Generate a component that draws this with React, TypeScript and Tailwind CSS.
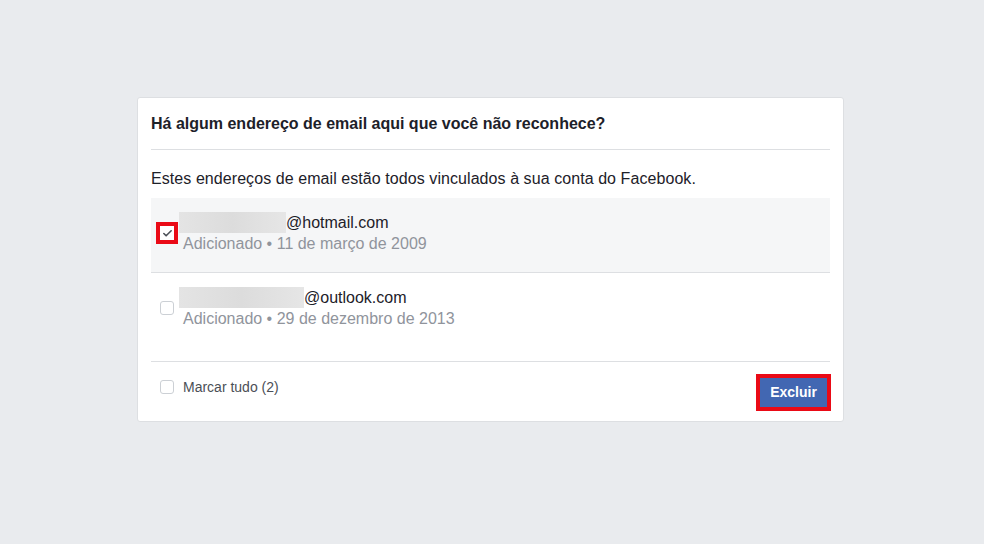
import { Check } from "lucide-react";

const emails = [
  { blur: 107, domain: "@hotmail.com", added: "Adicionado • 11 de março de 2009", checked: true },
  { blur: 125, domain: "@outlook.com", added: "Adicionado • 29 de dezembro de 2013", checked: false },
];

function Box({ checked, marked }: { checked?: boolean; marked?: boolean }) {
  return (
    <span
      className={
        marked
          ? "flex h-[14px] w-[14px] shrink-0 items-center justify-center bg-white outline-4 outline-[#ea0a16]"
          : "flex h-[14px] w-[14px] shrink-0 items-center justify-center rounded-[3px] border border-[#ccd0d5] bg-white"
      }
    >
      {checked && <Check size={11} strokeWidth={3.5} className="text-[#4b4f56]" />}
    </span>
  );
}

export default function App() {
  return (
    <div className="flex h-[544px] w-[984px] items-start justify-start bg-[#e9ebee] pl-[137px] pt-[97px] font-['Liberation_Sans',Arial,sans-serif] text-[#1d2129]">
      <div className="w-[707px] rounded-[3px] border border-[#dddfe2] bg-white px-[13px]">
        <div className="border-b border-[#dddfe2] pb-[16px] pt-[17px] text-[16px] font-bold leading-[18px]">
          Há algum endereço de email aqui que você não reconhece?
        </div>

        <p className="pt-[19px] pb-[9px] text-[16px] leading-[20px] tracking-[0.07px]">
          Estes endereços de email estão todos vinculados à sua conta do Facebook.
        </p>

        <div className="border-b border-[#dddfe2]">
          {emails.map((e, i) => (
            <div
              key={e.domain}
              className={
                i === 0
                  ? "flex items-center gap-[9px] border-b border-[#dddfe2] bg-[#f5f6f7] pb-[18px] pl-[9px] pt-[14px]"
                  : "flex items-center gap-[9px] pb-[32px] pl-[9px] pt-[14px]"
              }
            >
              <Box checked={e.checked} marked={e.checked} />
              <div className="text-[16px]">
                <div className="flex items-center leading-[20px]">
                  <span
                    className="-ml-[4px] h-[21px] bg-gradient-to-r from-[#e4e4e4] via-[#dcdcdc] to-[#e6e6e6]"
                    style={{ width: e.blur }}
                  />
                  <span>{e.domain}</span>
                </div>
                <div className="leading-[21px] text-[#90949c]">{e.added}</div>
              </div>
            </div>
          ))}
        </div>

        <div className="flex items-start justify-between pb-[10px] pt-[12px]">
          <label className="mt-[5px] flex items-center gap-[9px] pl-[9px] text-[14px] leading-[16px] text-[#4b4f56]">
            <Box />
            Marcar tudo (2)
          </label>
          <div className="-mr-[1px] border-4 border-[#ea0a16]">
            <button className="block h-[29px] w-[67px] bg-[#4267b2] text-[14px] font-bold text-white">
              Excluir
            </button>
          </div>
        </div>
      </div>
    </div>
  );
}
